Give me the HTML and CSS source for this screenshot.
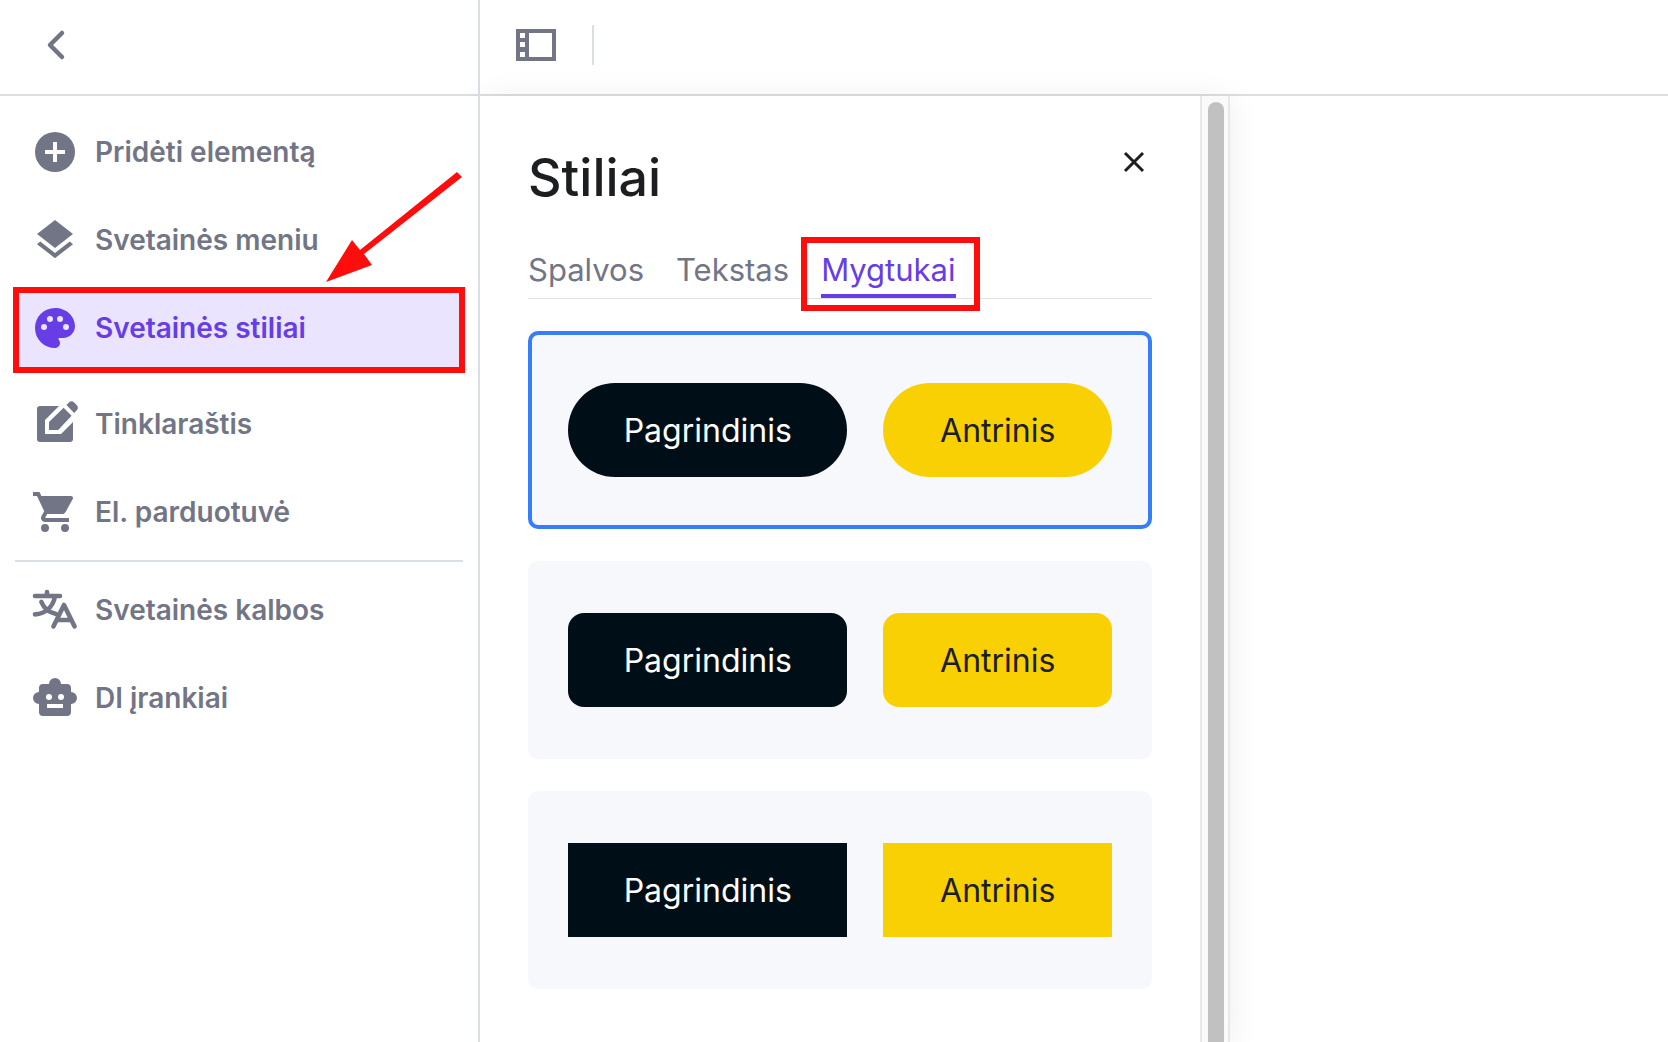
FILE: index.html
```html
<!DOCTYPE html>
<html lang="lt">
<head>
<meta charset="UTF-8">
<meta name="viewport" content="width=device-width, initial-scale=1.0">
<title>Svetainės stiliai</title>
<link rel="stylesheet" href="styles.css">
</head>
<body>
<div class="app">

<header class="topbar">
  <div class="topbar-back">
    <button class="icon-btn" aria-label="Atgal">
      <svg width="40" height="40" viewBox="0 0 40 40"><path d="M26 8 14 20l12 12" class="line thick"/></svg>
    </button>
  </div>
  <div class="topbar-tools">
    <button class="icon-btn" aria-label="Rodyti skydelį">
      <svg width="40" height="40" viewBox="0 0 40 40"><path fill-rule="evenodd" d="M0 4h40v32H0zM4 8v5h5V8zM4 17v5h5v-5zM4 27v5h5v-5zM13 8v24h23V8z"/></svg>
    </button>
    <span class="divider"></span>
  </div>
</header>

<div class="main">

<nav class="sidebar">
  <button class="nav-item">
    <svg viewBox="0 0 24 24"><path d="M12 2a10 10 0 1 0 0 20 10 10 0 0 0 0-20zm5 11h-4v4h-2v-4H7v-2h4V7h2v4h4z"/></svg>
    Pridėti elementą
  </button>
  <button class="nav-item">
    <svg viewBox="0 0 24 24"><path d="m11.99 18.54-7.37-5.73L3 14.07l9 7 9-7-1.63-1.27zM12 16l7.36-5.73L21 9l-9-7-9 7 1.63 1.27z"/></svg>
    Svetainės meniu
  </button>
  <button class="nav-item active">
    <svg viewBox="0 0 24 24"><path d="M12 2a10 10 0 0 0 0 20c1.38 0 2.5-1.12 2.5-2.5 0-.61-.23-1.2-.64-1.67-.08-.1-.13-.21-.13-.33 0-.28.22-.5.5-.5H16c3.31 0 6-2.69 6-6 0-4.96-4.49-9-10-9zm-5.5 11a1.5 1.5 0 1 1 0-3 1.5 1.5 0 0 1 0 3zm3-4a1.5 1.5 0 1 1 0-3 1.5 1.5 0 0 1 0 3zm5 0a1.5 1.5 0 1 1 0-3 1.5 1.5 0 0 1 0 3zm3 4a1.5 1.5 0 1 1 0-3 1.5 1.5 0 0 1 0 3z"/></svg>
    Svetainės stiliai
  </button>
  <button class="nav-item">
    <svg viewBox="0 0 24 24"><path d="M4.5 3H14l-7 7v7h8l6-6v8.500a1.500 1.500 0 0 1-1.500 1.500h-15A1.500 1.500 0 0 1 3 19.500v-15A1.500 1.500 0 0 1 4.500 3z"/><path d="m16.300 3.900 4 4-6.700 7.100H9v-4zM17.700 2.500l1.300-1.300c.8-.8 1.800-.7 2.600.1l1.200 1.200c.8.8.9 1.800.1 2.600l-1.300 1.400z"/></svg>
    Tinklaraštis
  </button>
  <button class="nav-item">
    <svg viewBox="0 0 24 24"><path d="M7 18a2 2 0 1 0 0 4 2 2 0 0 0 0-4zM1 2v2h2l3.600 7.590-1.350 2.450A2 2 0 0 0 7 17h12v-2H7.420a.25.25 0 0 1-.25-.25l.03-.12.9-1.630h7.450c.75 0 1.410-.41 1.750-1.030l3.580-6.490A1 1 0 0 0 20 4H5.210l-.94-2zM17 18a2 2 0 1 0 0 4 2 2 0 0 0 0-4z"/></svg>
    El. parduotuvė
  </button>
  <hr class="nav-rule">
  <button class="nav-item">
    <svg viewBox="0 0 24 24"><path d="M2 5h12.500M8 3v2M12 5.200c-1 5-4.500 8.600-10 9M5.200 8c1.300 3.200 4 5.300 7.300 6M11.200 20.200 16.500 9.500l5.300 10.700M13 17h7" class="line bold"/></svg>
    Svetainės kalbos
  </button>
  <button class="nav-item">
    <svg viewBox="0 0 24 24"><path d="M20 9V7a2 2 0 0 0-2-2h-3a3 3 0 0 0-6 0H6a2 2 0 0 0-2 2v2a3 3 0 0 0 0 6v4a2 2 0 0 0 2 2h12a2 2 0 0 0 2-2v-4a3 3 0 0 0 0-6zM9 10a1.500 1.500 0 1 1 0 3 1.500 1.500 0 0 1 0-3zm7 7H8v-2h8zm-1-4a1.500 1.500 0 1 1 0-3 1.500 1.500 0 0 1 0 3z"/></svg>
    DI įrankiai
  </button>
  <svg class="arrow" viewBox="0 0 136 112"><path d="M131 0 136 5 38 82 46 93 0 110 26 68 34 78z"/></svg>
</nav>

<section class="panel">
  <div class="panel-body">
    <div class="panel-head">
      <h1>Stiliai</h1>
      <button class="icon-btn close" aria-label="Uždaryti">
        <svg width="36" height="36" viewBox="0 0 36 36"><path d="m9 9 18 18M27 9 9 27"/></svg>
      </button>
    </div>

    <div class="tabs" role="tablist">
      <button role="tab" class="tab">Spalvos</button>
      <button role="tab" class="tab">Tekstas</button>
      <button role="tab" class="tab active" aria-selected="true">Mygtukai</button>
    </div>

    <div class="styles">
      <div class="style-card selected pill">
        <button class="sample primary">Pagrindinis</button>
        <button class="sample secondary">Antrinis</button>
      </div>
      <div class="style-card rounded">
        <button class="sample primary">Pagrindinis</button>
        <button class="sample secondary">Antrinis</button>
      </div>
      <div class="style-card">
        <button class="sample primary">Pagrindinis</button>
        <button class="sample secondary">Antrinis</button>
      </div>
    </div>
  </div>
  <div class="scrollbar"><div class="thumb"></div></div>
</section>

</div>
</div>
</body>
</html>
```
FILE: styles.css
```css
*{box-sizing:border-box;margin:0;padding:0}
html,body{height:100%;background:#fff;overflow:hidden}
body{font-family:Inter,"Open Sans",sans-serif;color:#1d1e20}
button{border:0;background:none;font:inherit;color:inherit;cursor:pointer}
svg{display:block;fill:currentColor}

.app{height:100%;display:flex;flex-direction:column}

/* top bar */
.topbar{
  display:flex;height:96px;flex-shrink:0;
  border-bottom:2px solid #dadfe4;color:#727586;
}
.topbar-back{width:480px;padding:25px 36px;border-right:2px solid #dadfe4}
.topbar-tools{
  flex:1;display:flex;align-items:flex-start;gap:36px;
  padding:25px 36px;
}
.divider{width:2px;height:40px;background:#dadfe4}

.line{fill:none;stroke:currentColor;stroke-width:2;stroke-linecap:round;stroke-linejoin:round}
.bold{stroke-width:2.3}
.thick{stroke-width:4.5}

.main{flex:1;display:flex;min-height:0}

/* sidebar */
.sidebar{
  position:relative;z-index:1;width:480px;flex-shrink:0;padding:16px 15px;
  display:flex;flex-direction:column;gap:8px;background:#fff;
  border-right:2px solid #dadfe4;color:#727586;
}
.nav-item{
  position:relative;display:flex;align-items:center;gap:16px;
  height:80px;padding:0 16px;
  font-size:28px;font-weight:600;text-align:left;
}
.nav-item svg{width:48px;height:48px}
.nav-item.active{background:#ebe4ff;color:#673de6;margin-bottom:8px}
.nav-item.active::after{
  content:"";position:absolute;inset:-1px -2px -5px;
  border:6px solid #ff0d0d;
}
.nav-rule{height:2px;border:0;background:#dadfe4}

.arrow{position:absolute;left:326px;top:76px;width:136px;height:112px;fill:#ff0d0d}

/* panel */
.panel{display:flex;width:750px;box-shadow:0 4px 30px rgba(0,0,0,.08)}
.panel-body{flex:1;padding:48px}
.panel-head{display:flex;justify-content:space-between;align-items:flex-start}
h1{font-size:52px;line-height:68px;font-weight:500}
.close{color:#1d1e20}
.close svg{stroke:currentColor;stroke-width:3}

.tabs{
  display:flex;gap:32px;margin-top:32px;
  border-bottom:1px solid #e2e2e4;color:#727586;
}
.tab{position:relative;height:54px;padding-bottom:4px;font-size:31px}
.tab.active{color:#673de6;box-shadow:inset 0 -4px #673de6}
.tab.active::after{
  content:"";position:absolute;inset:-7px -24px -13px -20px;
  border:6px solid #ff0d0d;
}

.styles{display:flex;flex-direction:column;gap:32px;margin-top:32px}
.style-card{
  display:flex;align-items:center;gap:36px;
  height:198px;padding:0 36px;
  border:4px solid transparent;border-radius:10px;background:#f6f8fc;
}
.style-card.selected{border-color:#357df9}
.sample{height:94px;font-size:32px}
.primary{flex:11;background:#000f17;color:#fff}
.secondary{flex:9;background:#f9d004;color:#1d1e20}
.pill .sample{border-radius:47px}
.rounded .sample{border-radius:16px}

.scrollbar{width:30px;padding:6px 4px 0 6px;background:#fafafa;border:solid #e8e8e8;border-width:0 2px}
.thumb{height:100%;border-radius:8px 8px 0 0;background:#c1c1c1}
```
